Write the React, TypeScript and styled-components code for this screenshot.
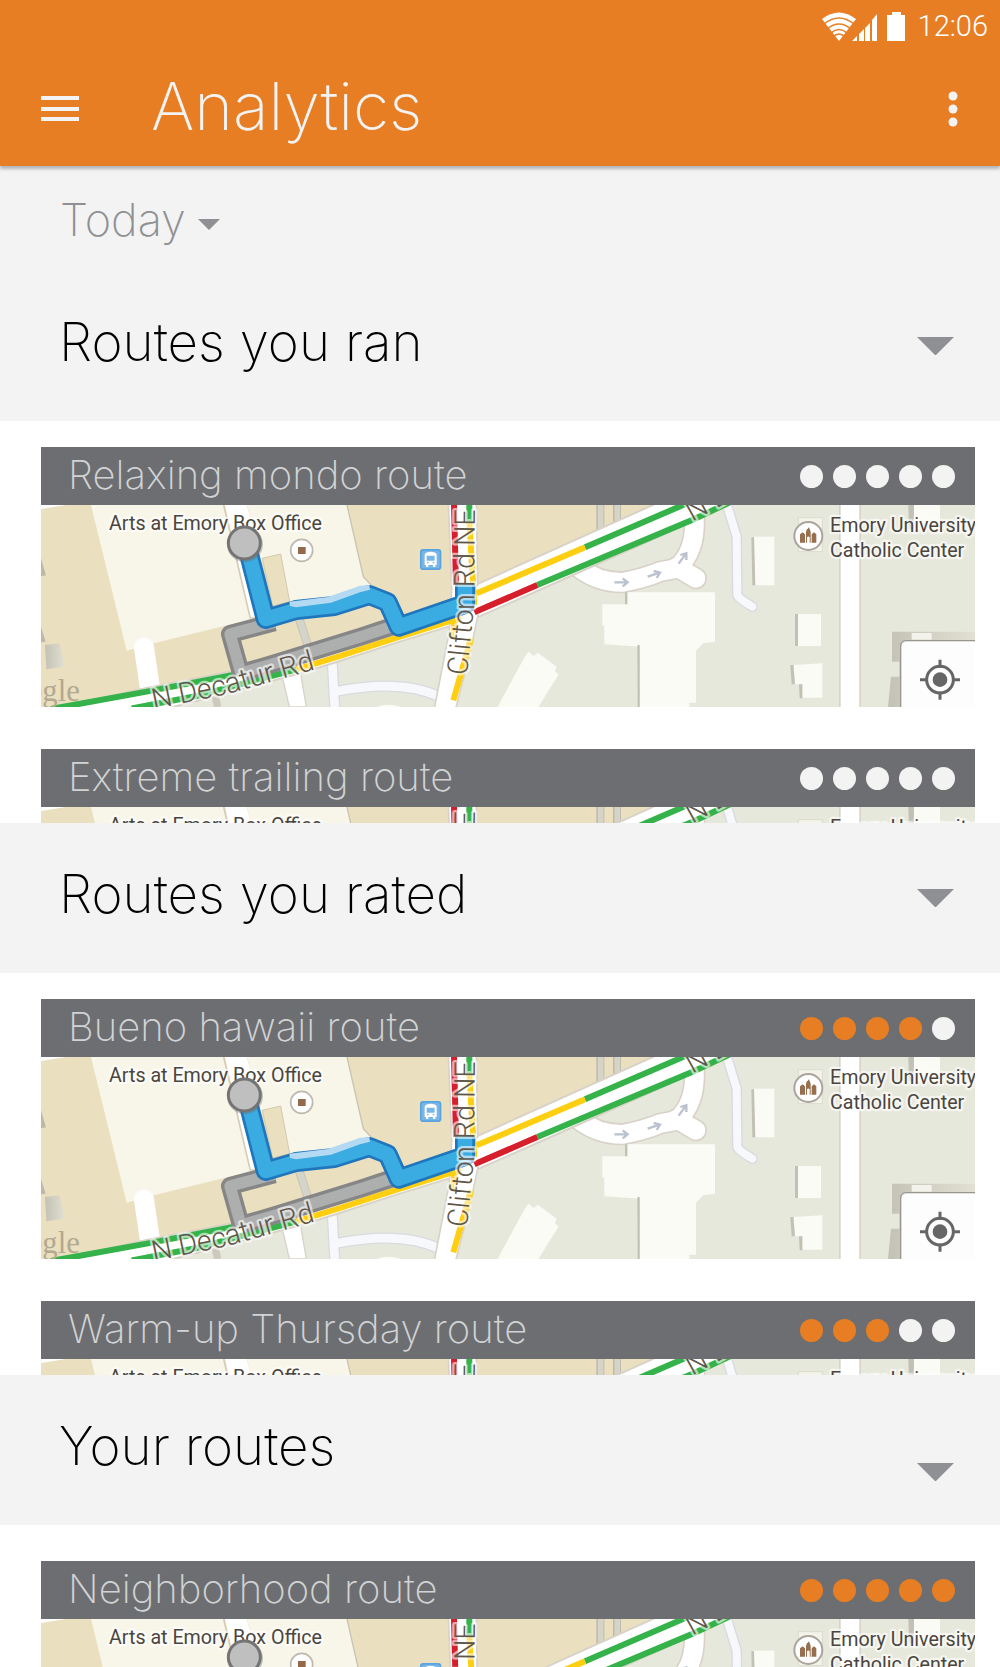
import React, { useId } from "react";
import styled, { createGlobalStyle } from "styled-components";

const color = {
  orange: "#e77e23",
  bar: "#6d6e71",
  band: "#f3f3f3",
  muted: "#8f9094",
  pale: "#d1d3d4",
};

const GlobalStyle = createGlobalStyle`
  *, *::before, *::after { box-sizing: border-box; }
  body { margin: 0; background: #fff; }
`;

const Screen = styled.div`
  display: flex;
  flex-direction: column;
  height: 100vh;
  overflow: hidden;
  background: #fff;
  font-family: Inter, "Noto Sans", sans-serif;
  font-weight: 200;
`;

const TopBar = styled.header`
  position: relative;
  flex: none;
  background: ${color.orange};
  color: ${color.band};
  box-shadow: 0 3px 3px rgba(60, 70, 80, 0.35);
`;

const StatusBar = styled.div`
  display: flex;
  align-items: center;
  justify-content: flex-end;
  height: 52px;
  padding: 0 12px 0 0;
  color: #fff;
`;

const StatusIcons = styled.svg`
  width: 84px;
  height: 30px;
  margin-right: 12px;
`;

const Clock = styled.time`
  font: 300 29px/52px Roboto, sans-serif;
`;

const Toolbar = styled.div`
  display: flex;
  align-items: center;
  height: 114px;
  padding: 0 23px 0 36px;
`;

const IconButton = styled.button`
  display: flex;
  align-items: center;
  justify-content: center;
  width: 48px;
  height: 48px;
  padding: 0;
  border: 0;
  background: none;
  color: inherit;
`;

const Title = styled.h1`
  flex: 1;
  margin: 0 0 6px 67px;
  font-size: 66px;
  line-height: 72px;
  font-weight: inherit;
`;

const FilterRow = styled.div`
  display: flex;
  flex: none;
  align-items: center;
  height: 105px;
  padding: 2px 60px 0;
  background: ${color.band};
`;

const FilterLabel = styled.label`
  display: flex;
  align-items: center;
  gap: 12px;
  color: ${color.muted};

  > svg {
    margin-top: 10px;
  }
`;

const FilterSelect = styled.select`
  appearance: none;
  padding: 0;
  border: 0;
  background: none;
  color: inherit;
  font: inherit;
  font-size: 45px;
  line-height: 60px;
`;

const SectionHead = styled.div<{ $low?: boolean }>`
  display: flex;
  flex: none;
  justify-content: space-between;
  align-items: center;
  height: 150px;
  padding: 0 41px 0 59px;
  background: ${color.band};

  > button {
    margin-top: ${(p) => (p.$low ? 44 : 0)}px;
  }
`;

const SectionTitle = styled.h2`
  margin: 0 0 8px;
  color: #000;
  font-size: 53px;
  line-height: 70px;
  font-weight: inherit;
`;

const Toggle = styled(IconButton)`
  color: ${color.muted};
`;

const RouteList = styled.div<{ $last?: boolean }>`
  display: flex;
  flex-direction: column;
  flex: ${(p) => (p.$last ? "1 1 0" : "0 0 402px")};
  gap: 42px;
  min-height: 0;
  padding: ${(p) => (p.$last ? 36 : 26)}px 25px 0 41px;
  overflow: hidden;
`;

const Card = styled.article`
  flex: none;
`;

const CardHead = styled.div`
  display: flex;
  justify-content: space-between;
  align-items: center;
  height: 58px;
  padding: 0 20px 0 27px;
  background: ${color.bar};
`;

const CardTitle = styled.h3`
  margin: 0 0 2px;
  color: ${color.pale};
  font-size: 40px;
  line-height: 56px;
  font-weight: inherit;
`;

const Rating = styled.div`
  display: flex;
  gap: 10px;
`;

const Dot = styled.span<{ $on: boolean }>`
  width: 23px;
  height: 23px;
  border-radius: 50%;
  background: ${(p) => (p.$on ? color.orange : color.band)};
`;

const MapSvg = styled.svg`
  display: block;
  width: 100%;
  height: 202px;
  font-family: Roboto, sans-serif;
  font-weight: 400;
`;

const Halo = styled.text`
  stroke: rgba(255, 255, 255, 0.6);
  stroke-width: 14px;
  stroke-linejoin: round;
  paint-order: stroke;
`;

function Caret({ width }: { width: number }) {
  return (
    <svg width={width} height={width / 2} viewBox="0 0 36 18" aria-hidden="true">
      <path d="M0 0H36L18 18Z" fill="currentColor" />
    </svg>
  );
}

function RouteMap() {
  const id = useId();
  return (
    <MapSvg viewBox="0 0 2802 606" preserveAspectRatio="xMidYMin slice" role="img" aria-label="Route map">
      <defs>
        <linearGradient id={id + "s"}>
          <stop offset="0" stopColor="#c4c1b5" />
          <stop offset="1" stopColor="#e2dfd3" />
        </linearGradient>
        <path id={id + "c"} d="M1278 512L1299 300L1302 -20" />
        <path id={id + "d"} d="M338 613L560 567L860 482" />
      </defs>

      {/* ground */}
      <rect width="2802" height="606" fill="#e7e8dc" />
      <path d="M0 0H1830L1309 235L1230 330L567 520L0 616Z" fill="#eadfbf" />
      <path d="M0 0H75L0 12Z" fill="#fff" />

      {/* campus buildings */}
      <path d="M150 0H548L628 345L537 366L339 415L257 437Z" fill="#f8f6e9" />
      <path d="M618 0H918L967 215L990 240L960 270L745 295L720 148L660 160Z" fill="#f8f6e9" />
      <path d="M918 0L967 215L990 240" fill="none" stroke="#c9c4b3" strokeWidth="4" />
      <path d="M552 0H617L662 165L690 340L628 335Z" fill="#fff" />
      <path d="M664 160L719 147L746 290L695 303Z" fill="#eadfbf" stroke="#d5cbb0" strokeWidth="3" />
      <path d="M548 0L628 340" stroke="#d9cdb8" strokeWidth="5" />
      <path d="M12 420L55 415L72 485L16 493Z" fill={`url(#${id}s)`} />
      <path d="M0 160L12 200L14 212H0Z M0 365L14 410L0 412Z" fill="#bdb9a8" />

      {/* side streets */}
      <path d="M309 428L330 570" stroke="#fff" strokeWidth="60" strokeLinecap="round" />
      <path d="M774 340L810 450" stroke="#c9c5b5" strokeWidth="26" />
      <path d="M774 340L810 450" stroke="#d5d4c8" strokeWidth="20" />
      <path d="M520 560L530 606" stroke="#cfc9bd" strokeWidth="22" />
      <path d="M725 520L778 500L796 606H745Z" fill="#fff" stroke="#d9d2c8" strokeWidth="4" />
      <path d="M872 440L882 620M880 560Q1080 520 1195 575" fill="none" stroke="#d8dae0" strokeWidth="34" />
      <path d="M872 440L882 620M880 560Q1080 520 1195 575" fill="none" stroke="#f6f8fb" strokeWidth="26" />
      <path d="M1678 0V105M1728 0V85" stroke="#beb9a9" strokeWidth="24" />
      <path d="M1679 0V105M1729 0V85" stroke="#d5d4c8" strokeWidth="17" />

      {/* loop drive */}
      <g fill="none" strokeLinecap="round" strokeLinejoin="round">
        <g stroke="#d9d2c8" strokeWidth="66">
          <path d="M1610 185Q1670 233 1745 232Q1810 220 1857 200L1907 190Q1965 140 1960 40M1907 186L1965 220" />
        </g>
        <g stroke="#fff" strokeWidth="56">
          <path d="M1610 185Q1670 233 1745 232Q1810 220 1857 200L1907 190Q1965 140 1960 40M1907 186L1965 220" />
        </g>
        <path d="M2055 -10L2087 95L2089 270Q2092 280 2134 305" stroke="#d8dae0" strokeWidth="32" />
        <path d="M2055 -10L2087 95L2089 270Q2092 280 2134 305" stroke="#f6f8fb" strokeWidth="24" />
      </g>
      <g fill="none" stroke="#b9c2ce" strokeWidth="7">
        <path d="M1720 232H1758M1745 220L1760 232L1745 244" />
        <path d="M1820 215L1856 203M1838 198L1857 203L1847 219" />
        <path d="M1913 176L1935 146M1918 150L1936 145L1936 165" />
      </g>

      {/* buildings east */}
      <g fill="#fafbf5">
        <path d="M1759 262H2022V410L1987 415L1965 437V593H1945V606H1797V425L1690 418V363L1684 360V298H1759Z" />
        <path d="M1446 465L1462 440L1478 453L1490 443L1547 485L1542 498L1552 510L1492 606H1370Z" />
        <path d="M1007 606Q1040 592 1080 606Z" />
        <path d="M2139 95H2200V241H2142Z M2270 327H2340V423H2270Z M2258 480L2344 475V578H2284V538H2262Z M2619 0H2697V72H2619Z" />
      </g>
      <g fill="#c3c1b5">
        <path d="M2131 97H2139L2143 241H2134Z M2262 327H2271V423H2262Z M2248 480H2257L2262 538H2252Z M2274 538H2284V580H2276Z M2602 0H2619V72H2604Z" />
        <path d="M1789 420H1796V606H1790Z M1752 262H1759V298H1752Z" />
      </g>
      <rect x="2394" width="66" height="606" fill="#d9d2c8" />
      <rect x="2399" width="56" height="606" fill="#fff" />

      {/* Decatur Rd */}
      <path
        d="M-20 622L317 549L567 500L700 468L960 385L1235 300L1309 237L1880 -20H2110L1489 258L1300 341L1067 413L897 468L767 508L467 588L300 630Z"
        fill="#fff"
        stroke="#d9d2c8"
        strokeWidth="6"
      />

      {/* Clifton Rd */}
      <path
        d="M1222 -10H1306L1311 330L1290 430L1242 620H1178L1225 380L1232 250Z"
        fill="#fff"
        stroke="#d9d2c8"
        strokeWidth="5"
      />
      <path d="M1225 315L1305 245L1330 235V322L1225 358Z" fill="#fff" />

      {/* traffic */}
      <g fill="none" strokeWidth="18">
        <g stroke="#35b34a">
          <path d="M30 612L317 560L600 505M272 610L467 573L767 493" />
          <path d="M1632 127L1945 -8M1489 240L1960 42L2070 -10M1285 0V50" />
        </g>
        <g stroke="#fece10">
          <path d="M767 493L897 453L1067 398L1260 338M1307 265L1632 127" />
          <path d="M1285 50L1300 300M1242 340L1234 400M1290 400L1237 586" />
        </g>
        <path d="M1300 322L1489 240M1239 0L1245 240" stroke="#d5202b" />
      </g>

      {/* alternative route */}
      <g fill="none" strokeLinejoin="round">
        <path d="M700 352L567 387L602 512M608 502L700 475L960 395L1060 362" stroke="#858685" strokeWidth="54" />
        <path d="M700 352L567 387L602 512M608 502L700 475L960 395L1060 362" stroke="#adafae" strokeWidth="34" />
      </g>

      {/* chosen route */}
      <g fill="none" strokeLinejoin="round">
        <path d="M612 100L674 342L765 315L880 303L985 270L1040 292L1073 365L1272 297V238" stroke="#1f76bd" strokeWidth="60" />
        <path d="M612 100L674 342L765 315L880 303L985 270L1040 292L1073 365L1272 297V238" stroke="#3aace1" strokeWidth="44" />
      </g>
      <path d="M745 290L860 276L957 242L985 240L987 254L957 262L870 293L765 307L747 303Z" fill="#b4d9f2" />

      {/* street names */}
      <g fill="#5f564a" fontSize="86" fontWeight="300">
        <Halo>
          <textPath href={`#${id}c`}>Clifton Rd NE</textPath>
        </Halo>
        <Halo>
          <textPath href={`#${id}d`}>N Decatur Rd</textPath>
        </Halo>
        <Halo transform="translate(1954 50) rotate(-29)">N D</Halo>
      </g>

      {/* places */}
      <rect x="2272" y="38" width="72" height="102" fill="#f3f3ea" stroke="#dadad0" strokeWidth="3" />
      <g fill="#4b453f" fontSize="59">
        <Halo x="204" y="74">Arts at Emory Box Office</Halo>
        <Halo x="2367" y="80">Emory University</Halo>
        <Halo x="2367" y="156">Catholic Center</Halo>
      </g>
      <text x="-42" y="587" fill="#b3a990" fontSize="92" fontFamily="Liberation Serif, serif">
        ogle
      </text>

      {/* start pin */}
      <circle cx="612" cy="118" r="54" fill="#6a6a6a" opacity="0.35" />
      <circle cx="610" cy="114" r="48" fill="#bfbfbf" stroke="#747474" strokeWidth="9" />

      {/* box office pin */}
      <circle cx="782" cy="136" r="33" fill="#fff" stroke="#beb8b0" strokeWidth="5" />
      <rect x="771" y="126" width="23" height="21" fill="#94694a" />

      {/* bus stop */}
      <rect x="1137" y="132" width="64" height="63" rx="9" fill="#5ba3df" />
      <rect x="1142" y="137" width="54" height="53" rx="6" fill="#79b6e8" />
      <path
        fillRule="evenodd"
        d="M1154 144Q1169 137 1184 144Q1187 146 1187 152V180H1183V186H1176V180H1162V186H1155V180H1151V152Q1151 146 1154 144ZM1157 152V167H1181V152ZM1158 171V175H1163V171ZM1175 171V175H1180V171Z"
        fill="#fff"
      />

      {/* chapel pin */}
      <circle cx="2302" cy="93" r="42" fill="#fff" stroke="#aaa49c" strokeWidth="6" />
      <path
        d="M2277 113V88L2285 82L2292 88V113ZM2312 113V88L2319 82L2326 88V113ZM2295 113V80L2298 72H2300L2303 67L2306 72L2309 80V113H2306V97Q2302 92 2298 97V113Z"
        fill="#976f4f"
      />

      {/* locate button */}
      <path d="M2553 380H2802V410H2580V606H2541L2550 515H2575V470H2553Z" fill={`url(#${id}s)`} />
      <rect x="2612" y="384" width="60" height="20" fill="#f3f3ec" />
      <path d="M2579 620V425Q2579 407 2597 407H2820V620Z" fill="#fdfdfd" stroke="#98958f" strokeWidth="4" />
      <g fill="none" stroke="#666" strokeWidth="9">
        <circle cx="2697" cy="524" r="40" />
        <path d="M2697 464V488M2697 560V584M2637 524H2661M2733 524H2757" />
      </g>
      <circle cx="2697" cy="524" r="22" fill="#666" />
    </MapSvg>
  );
}

type Route = { name: string; score: number };

function RouteCard({ name, score }: Route) {
  return (
    <Card>
      <CardHead>
        <CardTitle>{name}</CardTitle>
        <Rating role="img" aria-label={`${score} of 5`}>
          {[1, 2, 3, 4, 5].map((n) => (
            <Dot key={n} $on={n <= score} />
          ))}
        </Rating>
      </CardHead>
      <RouteMap />
    </Card>
  );
}

const sections: { title: string; routes: Route[] }[] = [
  {
    title: "Routes you ran",
    routes: [
      { name: "Relaxing mondo route", score: 0 },
      { name: "Extreme trailing route", score: 0 },
    ],
  },
  {
    title: "Routes you rated",
    routes: [
      { name: "Bueno hawaii route", score: 4 },
      { name: "Warm-up Thursday route", score: 3 },
    ],
  },
  { title: "Your routes", routes: [{ name: "Neighborhood route", score: 5 }] },
];

export default function App() {
  return (
    <Screen>
      <GlobalStyle />
      <TopBar>
        <StatusBar>
          <StatusIcons viewBox="0 0 84 30" fill="#fff" aria-hidden="true">
            <path d="M0 8Q17 -5 34 8L17 30Z" />
            <g fill="none" stroke={color.orange} strokeWidth="1.6">
              <path d="M2 13Q17 1 32 13M5 18Q17 8 29 18M9 22Q17 15 25 22M11 26Q17 20 23 26" />
            </g>
            <path d="M30 30L35 25V30ZM37 30V23L42 18V30ZM43 30V17L48 12V30ZM50 30V9L55 3V30Z" />
            <path d="M65 4H70V1H79V4H83V30H65Z" />
          </StatusIcons>
          <Clock>12:06</Clock>
        </StatusBar>
        <Toolbar>
          <IconButton type="button" aria-label="Menu">
            <svg width="40" height="26" viewBox="0 0 40 26">
              <path d="M1 2H39M1 13H39M1 23H39" stroke="currentColor" strokeWidth="4" />
            </svg>
          </IconButton>
          <Title>Analytics</Title>
          <IconButton type="button" aria-label="More options">
            <svg width="10" height="36" viewBox="0 0 10 36" fill="currentColor">
              <circle cx="5" cy="5" r="4.5" />
              <circle cx="5" cy="18" r="4.5" />
              <circle cx="5" cy="31" r="4.5" />
            </svg>
          </IconButton>
        </Toolbar>
      </TopBar>
      <FilterRow>
        <FilterLabel>
          <FilterSelect aria-label="Period" defaultValue="today">
            <option value="today">Today</option>
          </FilterSelect>
          <Caret width={22} />
        </FilterLabel>
      </FilterRow>
      {sections.map((section, i) => {
        const last = i === sections.length - 1;
        return (
          <React.Fragment key={section.title}>
            <SectionHead $low={last}>
              <SectionTitle>{section.title}</SectionTitle>
              <Toggle type="button" aria-label={`Toggle ${section.title}`}>
                <Caret width={37} />
              </Toggle>
            </SectionHead>
            <RouteList $last={last}>
              {section.routes.map((route) => (
                <RouteCard key={route.name} {...route} />
              ))}
            </RouteList>
          </React.Fragment>
        );
      })}
    </Screen>
  );
}
